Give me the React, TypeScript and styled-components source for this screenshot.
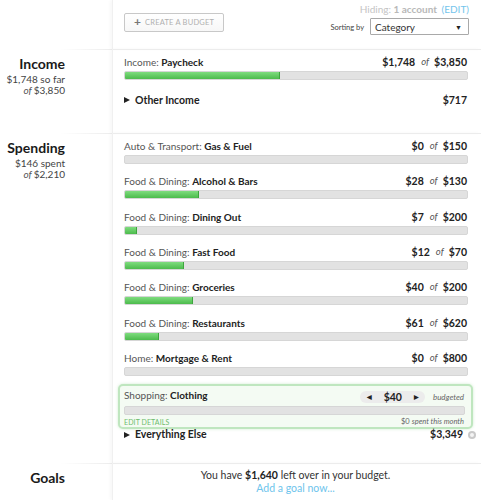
import React from "react";
import styled, { createGlobalStyle } from "styled-components";

const Global = createGlobalStyle`
  html, body { margin: 0; padding: 0; background: #fff; }
  body { font-family: Lato, "Open Sans", sans-serif; color: #333; }
  * { box-sizing: border-box; }
`;

const Page = styled.div`
  width: 481px;
  height: 500px;
  overflow: hidden;
  display: flex;
  flex-direction: column;
`;

const Section = styled.section<{ $h: number; $line?: boolean }>`
  display: flex;
  height: ${(p) => p.$h}px;
  position: relative;
  background-image: ${(p) =>
    p.$line
      ? "linear-gradient(to right, rgba(235,235,235,0) 60px, #ececec 112px)"
      : "none"};
  background-size: 100% 1px;
  background-repeat: no-repeat;
  background-position: top left;
`;

const Side = styled.div<{ $pt: number }>`
  width: 112px;
  flex: none;
  padding: ${(p) => p.$pt}px 47px 0 0;
  text-align: right;
`;

const Main = styled.div<{ $pt: number }>`
  flex: 1;
  padding: ${(p) => p.$pt}px 14px 0 11px;
  border-left: 1px solid #f0f0f0;
  box-shadow: -2px 0 3px rgba(0, 0, 0, 0.03);
  position: relative;
`;

const SideTitle = styled.div`
  font-size: 14px;
  font-weight: 700;
  color: #1a1a1a;
  line-height: 17px;
  margin-bottom: 2px;
`;

const SideSub = styled.div`
  font-size: 10px;
  line-height: 10.5px;
  color: #444;
  white-space: nowrap;
`;

const Of = styled.em`
  font-style: italic;
  margin-right: 2px;
  color: #555;
`;

const TopBar = styled.div`
  display: flex;
  justify-content: space-between;
  align-items: flex-start;
  margin-right: -2px;
`;

const CreateButton = styled.button`
  margin-top: 13px;
  width: 100px;
  height: 19px;
  border: 1px solid #c8c8c8;
  border-radius: 2px;
  background: linear-gradient(#fff, #f7f7f7);
  color: #b0b0b0;
  font-family: Lato, sans-serif;
  font-size: 7.5px;
  letter-spacing: 0.2px;
  text-transform: uppercase;
  display: flex;
  align-items: center;
  justify-content: center;
  gap: 4px;
  padding: 0;
`;

const Plus = styled.span`
  font-size: 12px;
  color: #777;
  font-weight: 700;
  line-height: 1;
  margin-top: -1px;
`;

const TopRight = styled.div`
  display: flex;
  flex-direction: column;
  align-items: flex-end;
  padding-top: 3px;
`;

const Hiding = styled.div`
  font-size: 10px;
  line-height: 12px;
  color: #c4c4c4;
  b { font-weight: 700; color: #b8b8b8; }
  span { color: #74c4ec; margin-left: 2px; }
`;

const SortRow = styled.div`
  display: flex;
  align-items: center;
  gap: 6px;
  margin-top: 3px;
`;

const SortLabel = styled.span`
  font-size: 7.5px;
  color: #444;
  margin-top: 2px;
`;

const Select = styled.div`
  width: 99px;
  height: 17px;
  border: 1px solid #a9a9a9;
  border-radius: 1px;
  display: flex;
  align-items: center;
  justify-content: space-between;
  padding: 0 6px 0 4px;
  font-size: 10px;
  color: #333;
  span { font-size: 7px; color: #222; }
`;

const Row = styled.div<{ $h?: number }>`
  height: ${(p) => p.$h ?? 35.33}px;
`;

const LabelLine = styled.div`
  display: flex;
  justify-content: space-between;
  align-items: baseline;
  font-size: 10px;
  line-height: 16px;
  color: #555;
  b { font-weight: 700; color: #222; }
`;

const Amount = styled.div`
  font-weight: 700;
  color: #222;
  font-size: 10.5px;
  white-space: nowrap;
  display: flex;
  align-items: center;
`;

const OfMid = styled.em`
  font-weight: 400;
  font-style: italic;
  color: #555;
  font-size: 9.5px;
  margin: 0 5px 0 6px;
`;

const Bar = styled.div`
  height: 9px;
  margin-top: 1px;
  margin-right: -1px;
  background: #e2e2e2;
  border: 1px solid #d6d6d6;
  border-radius: 2px;
  overflow: hidden;
`;

const Fill = styled.div`
  height: 100%;
  background: linear-gradient(#7fdc7f, #4cbb4c);
  border-right: 1px solid #3ea53e;
`;

const Expander = styled.div<{ $lh?: number }>`
  display: flex;
  justify-content: space-between;
  align-items: center;
  font-size: 10.5px;
  line-height: ${(p) => p.$lh ?? 16}px;
  color: #222;
`;

const ExpLabel = styled.div`
  display: flex;
  align-items: center;
  gap: 5px;
  font-weight: 700;
  &::before {
    content: "";
    border-left: 6px solid #222;
    border-top: 3.5px solid transparent;
    border-bottom: 3.5px solid transparent;
  }
`;

const EditBox = styled.div`
  margin: -1px -6px 0 -6px;
  height: 45px;
  border: 2px solid #bfe6bf;
  border-radius: 5px;
  background: #f4fbf3;
  box-shadow: 0 0 3px rgba(120, 200, 120, 0.35);
  padding: 1px 7px 0 4px;
`;

const Stepper = styled.div`
  display: flex;
  align-items: center;
  gap: 8px;
`;

const Pill = styled.div`
  display: flex;
  align-items: center;
  gap: 12px;
  background: #ececec;
  border-radius: 7px;
  height: 12px;
  padding: 0 6px 0 7px;
  font-weight: 700;
  font-size: 10.5px;
  color: #222;
  i { font-style: normal; font-size: 6px; color: #222; }
`;

const Budgeted = styled.em`
  font-style: italic;
  font-size: 8px;
  color: #666;
  font-weight: 400;
`;

const BoxFoot = styled.div`
  display: flex;
  justify-content: space-between;
  align-items: center;
  margin-top: 2px;
  font-size: 7px;
  line-height: 10px;
`;

const EditLink = styled.span`
  color: #6dbb6d;
  text-transform: uppercase;
  letter-spacing: 0.1px;
`;

const Spent = styled.span`
  color: #666;
  font-size: 7.5px;
  em { font-style: italic; margin-left: 2px; }
`;

const Gear = styled.span`
  display: inline-block;
  width: 8px;
  height: 8px;
  border-radius: 50%;
  background: #c9c9c9;
  margin-left: 5px;
  margin-right: -9px;
  position: relative;
  &::after {
    content: "";
    position: absolute;
    inset: 2px;
    border-radius: 50%;
    background: #f4f4f4;
  }
`;

const GoalsText = styled.div`
  text-align: center;
  font-size: 10.5px;
  line-height: 13px;
  color: #333;
  b { font-weight: 700; color: #222; }
`;

const GoalLink = styled.div`
  text-align: center;
  font-size: 10.5px;
  line-height: 12px;
  color: #6ec4ec;
`;

type Cat = { group: string; name: string; spent: number; budget: number };

const cats: Cat[] = [
  { group: "Auto & Transport", name: "Gas & Fuel", spent: 0, budget: 150 },
  { group: "Food & Dining", name: "Alcohol & Bars", spent: 28, budget: 130 },
  { group: "Food & Dining", name: "Dining Out", spent: 7, budget: 200 },
  { group: "Food & Dining", name: "Fast Food", spent: 12, budget: 70 },
  { group: "Food & Dining", name: "Groceries", spent: 40, budget: 200 },
  { group: "Food & Dining", name: "Restaurants", spent: 61, budget: 620 },
  { group: "Home", name: "Mortgage & Rent", spent: 0, budget: 800 },
];

const fmt = (n: number) => "$" + n.toLocaleString("en-US");

function BudgetRow({ c }: { c: Cat }) {
  const pct = Math.min(100, (c.spent / c.budget) * 100);
  return (
    <Row>
      <LabelLine>
        <span>
          {c.group}: <b>{c.name}</b>
        </span>
        <Amount>
          {fmt(c.spent)}
          <OfMid>of</OfMid>
          {fmt(c.budget)}
        </Amount>
      </LabelLine>
      <Bar>{pct > 0 && <Fill style={{ width: `${pct}%` }} />}</Bar>
    </Row>
  );
}

export default function App() {
  return (
    <Page>
      <Global />
      <Section $h={49}>
        <Side $pt={0} />
        <Main $pt={0}>
          <TopBar>
            <CreateButton>
              <Plus>+</Plus> Create a budget
            </CreateButton>
            <TopRight>
              <Hiding>
                Hiding: <b>1 account</b> <span>(EDIT)</span>
              </Hiding>
              <SortRow>
                <SortLabel>Sorting by</SortLabel>
                <Select>
                  Category <span>▼</span>
                </Select>
              </SortRow>
            </TopRight>
          </TopBar>
        </Main>
      </Section>

      <Section $h={84} $line>
        <Side $pt={6}>
          <SideTitle>Income</SideTitle>
          <SideSub>$1,748 so far</SideSub>
          <SideSub>
            <Of>of</Of>$3,850
          </SideSub>
        </Side>
        <Main $pt={5}>
          <Row $h={38}>
            <LabelLine>
              <span>
                Income: <b>Paycheck</b>
              </span>
              <Amount>
                $1,748<OfMid>of</OfMid>$3,850
              </Amount>
            </LabelLine>
            <Bar>
              <Fill style={{ width: `${(1748 / 3850) * 100}%` }} />
            </Bar>
          </Row>
          <Expander>
            <ExpLabel>Other Income</ExpLabel>
            <Amount>$717</Amount>
          </Expander>
        </Main>
      </Section>

      <Section $h={330} $line>
        <Side $pt={6}>
          <SideTitle>Spending</SideTitle>
          <SideSub>$146 spent</SideSub>
          <SideSub>
            <Of>of</Of>$2,210
          </SideSub>
        </Side>
        <Main $pt={5}>
          {cats.map((c) => (
            <BudgetRow key={c.name} c={c} />
          ))}
          <EditBox>
            <LabelLine>
              <span>
                Shopping: <b>Clothing</b>
              </span>
              <Stepper>
                <Pill>
                  <i>◀</i>$40<i>▶</i>
                </Pill>
                <Budgeted>budgeted</Budgeted>
              </Stepper>
            </LabelLine>
            <Bar />
            <BoxFoot>
              <EditLink>Edit details</EditLink>
              <Spent>
                $0<em>spent this month</em>
              </Spent>
            </BoxFoot>
          </EditBox>
          <Expander $lh={11}>
            <ExpLabel>Everything Else</ExpLabel>
            <Amount>
              $3,349
              <Gear />
            </Amount>
          </Expander>
        </Main>
      </Section>

      <Section $h={37} $line>
        <Side $pt={6}>
          <SideTitle>Goals</SideTitle>
        </Side>
        <Main $pt={6}>
          <GoalsText>
            You have <b>$1,640</b> left over in your budget.
          </GoalsText>
          <GoalLink>Add a goal now...</GoalLink>
        </Main>
      </Section>
    </Page>
  );
}
